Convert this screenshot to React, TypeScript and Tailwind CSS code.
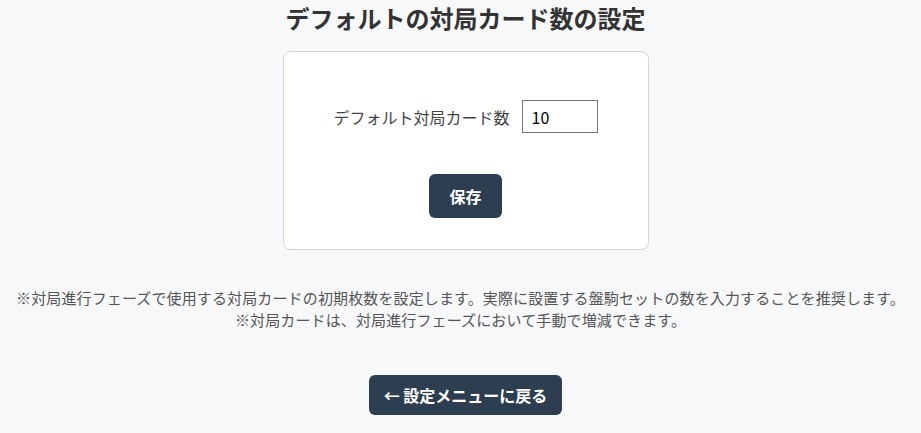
export default function App() {
  return (
    <div
      className="min-h-[433px] bg-[#f7f8fa] flex flex-col items-center pt-[2px] text-[#333]"
      style={{ fontFamily: '"Noto Sans CJK JP", "Noto Sans", sans-serif' }}
    >
      <h1 className="ml-[10px] text-2xl leading-8 font-bold text-[#333]">
        デフォルトの対局カード数の設定
      </h1>

      <div className="ml-[10px] mt-[17px] w-[366px] bg-white border border-[#d1d5db] rounded-lg pt-12 pb-[31px] flex flex-col items-center">
        <div className="flex items-center gap-3">
          <label className="text-base text-[#444]">デフォルト対局カード数</label>
          <input
            type="number"
            defaultValue={10}
            className="w-[76px] h-[33px] border border-[#767676] pl-[9px] text-base text-black bg-white outline-none [appearance:textfield]"
          />
        </div>
        <button className="mt-[41px] bg-[#2d3e50] text-white text-base font-bold px-5 py-[10px] leading-6 rounded-md">
          保存
        </button>
      </div>

      <div className="mt-[37px] text-[15px] leading-[22px] tracking-[0.13px] text-[#555] text-center">
        <p>
          ※対局進行フェーズで使用する対局カードの初期枚数を設定します。実際に設置する盤駒セットの数を入力することを推奨します。
        </p>
        <p>※対局カードは、対局進行フェーズにおいて手動で増減できます。</p>
      </div>

      <button className="ml-[10px] mt-[44px] bg-[#2d3e50] text-white text-base font-bold px-[15px] py-2 leading-6 rounded-md">
        ← 設定メニューに戻る
      </button>
    </div>
  );
}
